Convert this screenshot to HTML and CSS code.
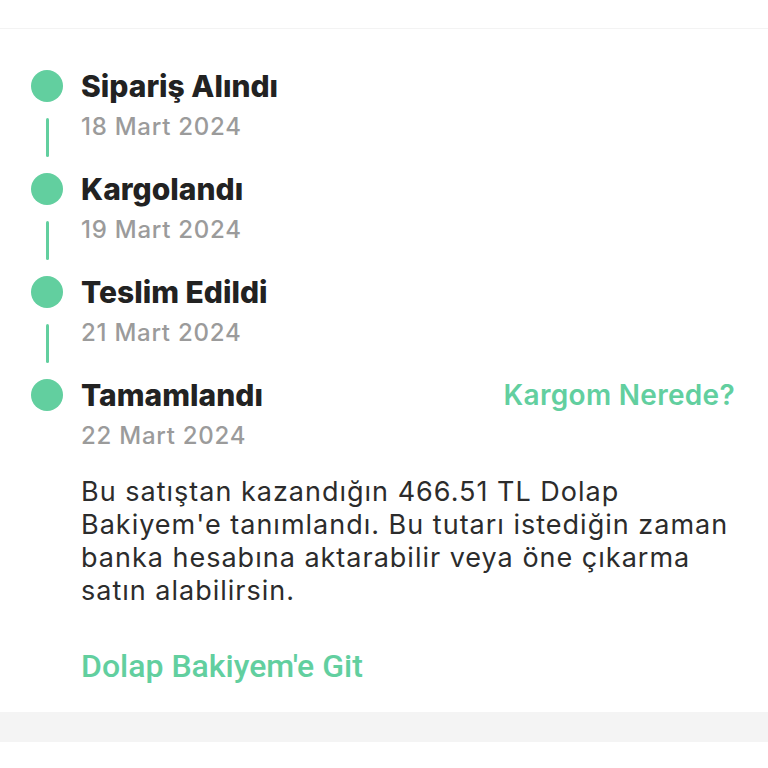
FILE: index.html
```html
<!DOCTYPE html>
<html>
<head>
    <meta charset="UTF-8">
    <link rel="stylesheet" href="styles.css">
</head>
<body>
    <div class="top-bar"></div>
    <div class="timeline">
        <div class="step">
            <div class="marker">
                <div class="dot"></div>
                <div class="line"></div>
            </div>
            <div class="info">
                <div class="title">Sipariş Alındı</div>
                <div class="date">18 Mart 2024</div>
            </div>
        </div>
        <div class="step">
            <div class="marker">
                <div class="dot"></div>
                <div class="line"></div>
            </div>
            <div class="info">
                <div class="title">Kargolandı</div>
                <div class="date">19 Mart 2024</div>
            </div>
        </div>
        <div class="step">
            <div class="marker">
                <div class="dot"></div>
                <div class="line"></div>
            </div>
            <div class="info">
                <div class="title">Teslim Edildi</div>
                <div class="date">21 Mart 2024</div>
            </div>
        </div>
        <div class="step last">
            <div class="marker">
                <div class="dot"></div>
            </div>
            <div class="info">
                <div class="title-row">
                    <div class="title">Tamamlandı</div>
                    <a class="cargo-link">Kargom Nerede?</a>
                </div>
                <div class="date">22 Mart 2024</div>
                <p class="note">Bu satıştan kazandığın 466.51 TL Dolap Bakiyem'e tanımlandı. Bu tutarı istediğin zaman banka hesabına aktarabilir veya öne çıkarma satın alabilirsin.</p>
                <a class="balance-link">Dolap Bakiyem'e Git</a>
            </div>
        </div>
    </div>
    <div class="gray-band"></div>
</body>
</html>
```

FILE: styles.css
```css
body {
    margin: 0;
    background: #fff;
    font-family: 'Inter', 'Noto Sans', sans-serif;
    width: 768px;
    height: 768px;
    overflow: hidden;
}

.top-bar {
    height: 28px;
    border-bottom: 1px solid #f3f3f3;
}

.timeline {
    padding: 41px 33px 31px 31px;
}

.step {
    display: flex;
    gap: 18px;
}

.marker {
    width: 32px;
    flex-shrink: 0;
    display: flex;
    flex-direction: column;
    align-items: center;
}

.dot {
    width: 32px;
    height: 32px;
    border-radius: 50%;
    background: #62cf9f;
}

.line {
    width: 3px;
    height: 39px;
    margin: 16px 0;
    border-radius: 2px;
    background: #62cf9f;
}

.info {
    flex: 1;
}

.title {
    font-size: 30px;
    font-weight: 800;
    line-height: 32px;
    color: #222;
    letter-spacing: 0;
}

.date {
    margin-top: 10px;
    font-size: 24px;
    font-weight: 500;
    line-height: 30px;
    color: #9b9b9b;
    letter-spacing: 0.75px;
}

.title-row {
    display: flex;
    justify-content: space-between;
    align-items: center;
}

.cargo-link {
    font-size: 28px;
    font-weight: 600;
    color: #62cf9f;
    line-height: 32px;
    letter-spacing: 0.3px;
}

.note {
    margin: 24px 0 0;
    font-size: 27px;
    line-height: 33px;
    color: #2c2c2c;
    letter-spacing: 1px;
}

.balance-link {
    display: block;
    margin-top: 44px;
    font-family: 'Roboto', sans-serif;
    font-size: 32px;
    font-weight: 500;
    line-height: 30px;
    color: #62cf9f;
}

.gray-band {
    height: 30px;
    background: #f4f4f4;
}
```
